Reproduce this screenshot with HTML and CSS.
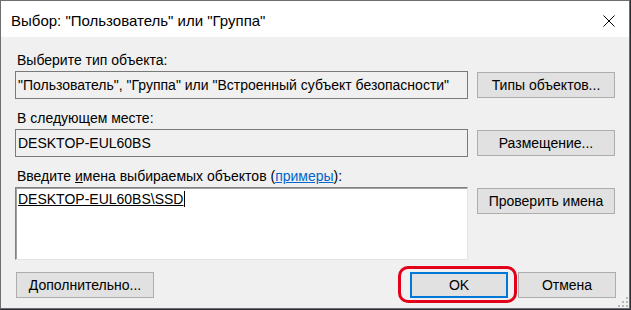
FILE: index.html
```html
<!DOCTYPE html>
<html lang="ru">
<head>
  <meta charset="UTF-8">
  <title>Выбор: "Пользователь" или "Группа"</title>
  <link rel="stylesheet" href="styles.css">
</head>
<body>
  <div class="window">
    <div class="titlebar">
      <span class="title">Выбор: "Пользователь" или "Группа"</span>
      <svg class="close" width="12" height="12" viewBox="0 0 12 12">
        <path d="M0.5 0.5 L11.5 11.5 M11.5 0.5 L0.5 11.5" stroke="#000" stroke-width="1" fill="none"/>
      </svg>
    </div>

    <div class="content">
      <div class="label">Выберите тип объекта:</div>
      <div class="row">
        <div class="field">"Пользователь", "Группа" или "Встроенный субъект безопасности"</div>
        <button class="btn">Типы объектов...</button>
      </div>

      <div class="label label-gap">В следующем месте:</div>
      <div class="row">
        <div class="field">DESKTOP-EUL60BS</div>
        <button class="btn">Размещение...</button>
      </div>

      <div class="label label-gap">Введите <u>и</u>мена выбираемых объектов (<a class="link">примеры</a>):</div>
      <div class="row row-top">
        <div class="names"><span class="name">DESKTOP-EUL60BS\SSD</span><span class="caret"></span></div>
        <button class="btn">Проверить имена</button>
      </div>

      <div class="footer">
        <button class="btn">Дополнительно...</button>
        <div class="footer-right">
          <div class="ok-wrap">
            <button class="btn btn-ok">OK</button>
            <div class="mark"></div>
          </div>
          <button class="btn btn-small">Отмена</button>
        </div>
      </div>
    </div>

    <svg class="grip" width="10" height="10" viewBox="0 0 10 10">
      <rect x="8" y="0" width="2" height="2" fill="#b8b8b8"/>
      <rect x="4" y="4" width="2" height="2" fill="#b8b8b8"/>
      <rect x="8" y="4" width="2" height="2" fill="#b8b8b8"/>
      <rect x="0" y="8" width="2" height="2" fill="#b8b8b8"/>
      <rect x="4" y="8" width="2" height="2" fill="#b8b8b8"/>
      <rect x="8" y="8" width="2" height="2" fill="#b8b8b8"/>
    </svg>
  </div>
</body>
</html>
```

FILE: styles.css
```css
body {
  margin: 0;
  background: #2b2b33;
  font-family: 'Liberation Sans', Arial, sans-serif;
  color: #000;
}

.window {
  position: relative;
  width: 628px;
  height: 307px;
  border: 1px solid #6e6e6e;
  background: #f0f0f0;
  display: flex;
  flex-direction: column;
}

.titlebar {
  height: 36px;
  background: #fff;
  display: flex;
  align-items: center;
  justify-content: space-between;
  padding: 0 14px 0 10px;
}

.title {
  font-size: 15px;
  margin-top: 2px;
}

.close {
  margin-top: 3px;
}

.content {
  padding: 15px 13px 0 14px;
  font-size: 14px;
}

.label {
  height: 16px;
  line-height: 16px;
  padding-left: 2px;
  margin-bottom: 3px;
}

.label-gap {
  margin-top: 11px;
}

.link {
  color: #0066cc;
  text-decoration: underline;
}

.row {
  display: flex;
  align-items: center;
  gap: 9px;
}

.row-top {
  align-items: flex-start;
}

.field {
  width: 449px;
  height: 26px;
  line-height: 26px;
  border: 1px solid #7a7a7a;
  padding-left: 2px;
  white-space: nowrap;
  overflow: hidden;
}

.names {
  width: 449px;
  height: 68px;
  background: #fff;
  border-style: solid;
  border-width: 1px;
  border-color: #828282 #e3e3e3 #e3e3e3 #828282;
  box-shadow: inset 1px 1px 0 #a0a0a0;
  padding: 3px 0 0 2px;
  line-height: 16px;
}

.name {
  text-decoration: underline;
}

.caret {
  display: inline-block;
  width: 1px;
  height: 16px;
  background: #000;
  vertical-align: top;
  margin-left: 1px;
}

.btn {
  width: 138px;
  height: 26px;
  background: #e1e1e1;
  border: 1px solid #adadad;
  font-family: inherit;
  font-size: 14px;
  color: #000;
  padding: 0;
}

.row-top .btn {
  margin-top: 1px;
}

.footer {
  display: flex;
  justify-content: space-between;
  margin-top: 12px;
  padding-left: 1px;
}

.footer-right {
  display: flex;
  gap: 10px;
}

.ok-wrap {
  position: relative;
}

.btn-ok {
  width: 98px;
  border: 2px solid #0078d7;
}

.btn-small {
  width: 98px;
}

.mark {
  position: absolute;
  left: -12px;
  right: -9px;
  top: -6px;
  bottom: -5px;
  border: 3px solid #e3001b;
  border-radius: 10px;
}

.grip {
  position: absolute;
  right: 1px;
  bottom: 1px;
}
```
